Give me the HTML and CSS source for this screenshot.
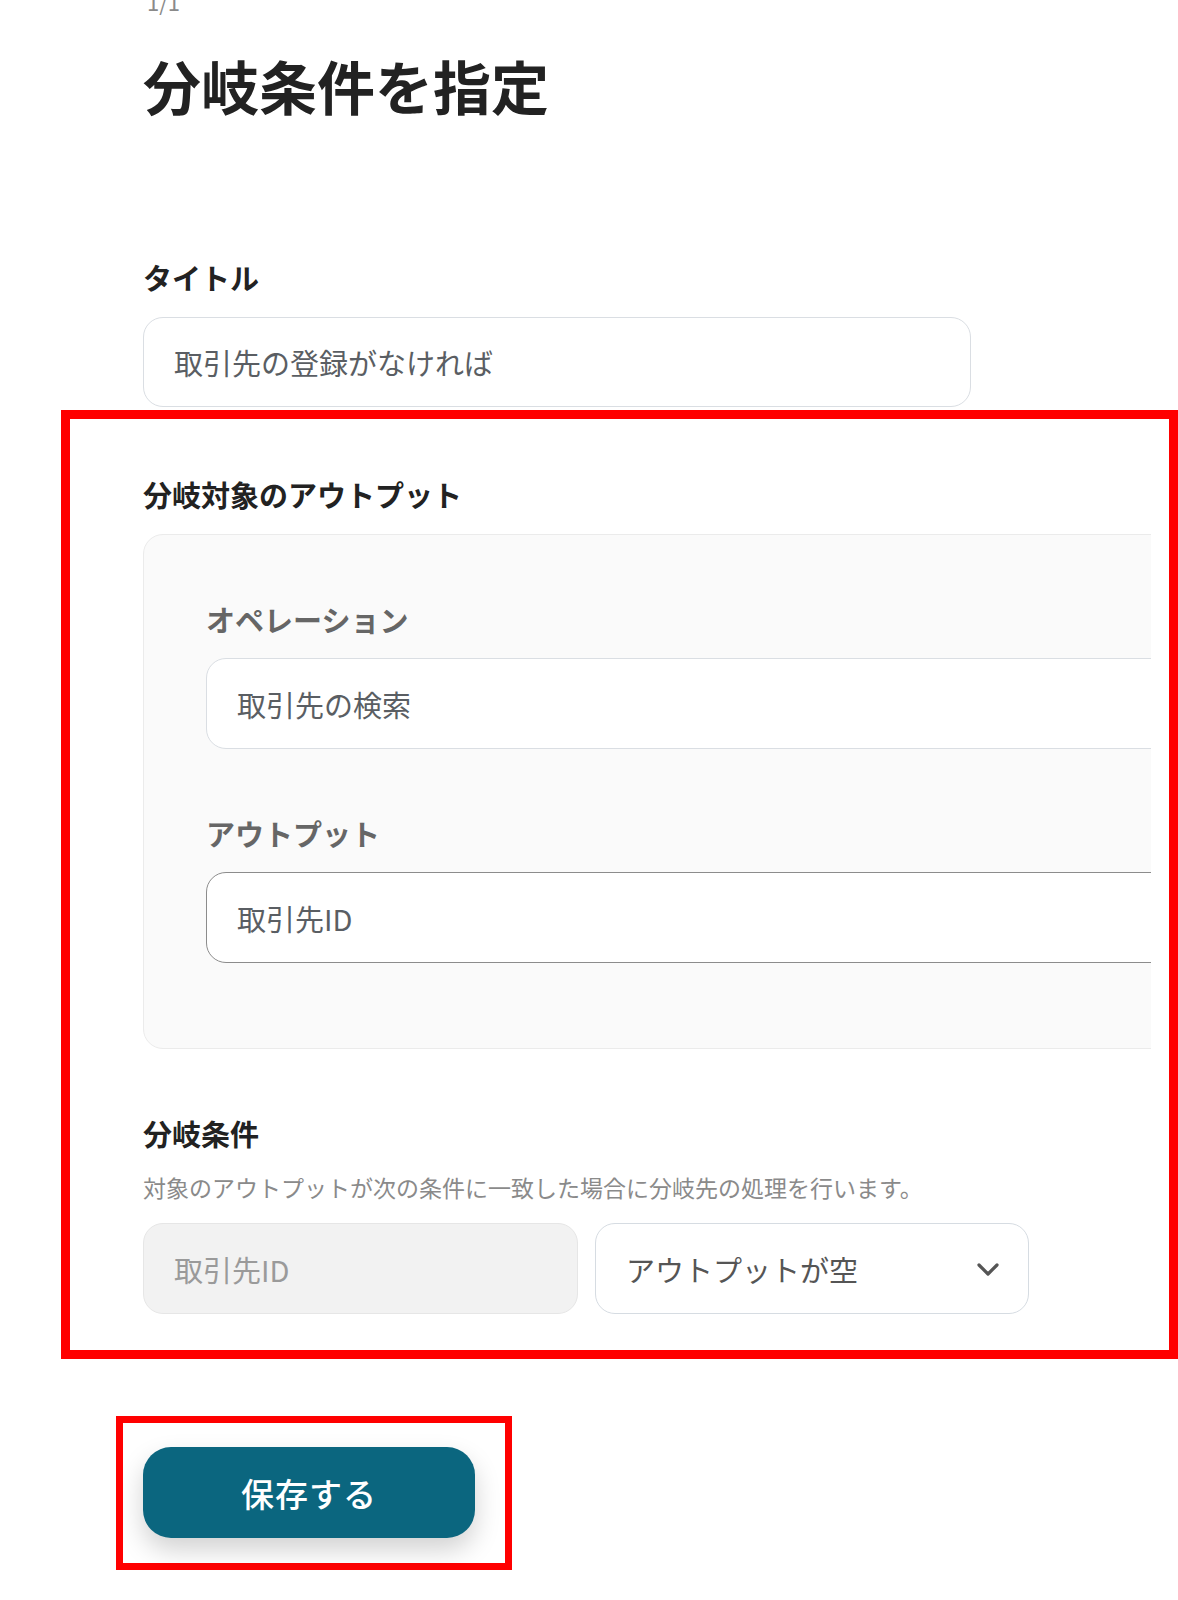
FILE: index.html
```html
<!DOCTYPE html>
<html lang="ja">
<head>
<meta charset="utf-8">
<title>分岐条件を指定</title>
<link rel="stylesheet" href="styles.css">
</head>
<body>
<main class="page">
  <div class="pager">1/1</div>
  <h1 class="page-title">分岐条件を指定</h1>

  <section class="field">
    <div class="field-label">タイトル</div>
    <div class="input input-title">取引先の登録がなければ</div>
  </section>

  <section class="highlight highlight-main">
    <div class="highlight-clip">
      <div class="field-label">分岐対象のアウトプット</div>
      <div class="panel">
        <div class="panel-label">オペレーション</div>
        <div class="input input-wide">取引先の検索</div>
        <div class="panel-label panel-label-gap">アウトプット</div>
        <div class="input input-wide input-active">取引先ID</div>
      </div>

      <div class="field-label cond-label">分岐条件</div>
      <p class="desc">対象のアウトプットが次の条件に一致した場合に分岐先の処理を行います。</p>
      <div class="cond-row">
        <div class="input input-disabled">取引先ID</div>
        <div class="input input-select">
          <span>アウトプットが空</span>
          <svg class="chevron" width="22" height="14" viewBox="0 0 22 14" aria-hidden="true">
            <polyline points="2,2 11,11 20,2" fill="none" stroke="#555" stroke-width="3.2" stroke-linecap="round" stroke-linejoin="round"/>
          </svg>
        </div>
      </div>
    </div>
  </section>

  <div class="highlight highlight-btn">
    <button class="save-btn" type="button">保存する</button>
  </div>
</main>
</body>
</html>
```

FILE: styles.css
```css
* {
  box-sizing: border-box;
}

html, body {
  margin: 0;
  padding: 0;
  background: #ffffff;
}

body {
  font-family: "Noto Sans CJK JP", "Noto Sans", sans-serif;
  color: #222222;
  overflow: hidden;
}

.page {
  padding-left: 143px;
  width: 1178px;
}

.pager {
  margin-top: -14px;
  font-size: 22px;
  line-height: 30px;
  color: #8a8a8a;
  padding-left: 4px;
}

.page-title {
  margin: 34px 0 137px;
  font-size: 58px;
  line-height: 70px;
  font-weight: 700;
  color: #222222;
}

.field-label {
  font-size: 29px;
  line-height: 40px;
  font-weight: 700;
  color: #222222;
  margin-bottom: 20px;
}

.input {
  height: 90px;
  border: 1.5px solid #dadee3;
  border-radius: 20px;
  background: #ffffff;
  display: flex;
  align-items: center;
  padding-left: 30px;
  font-size: 29px;
  color: #5a5e63;
  white-space: nowrap;
}

.input-title {
  width: 828px;
}

.highlight {
  border: 9px solid #ff0000;
}

.highlight-main {
  margin-top: 3px;
  margin-left: -82px;
  width: 1117px;
  padding: 55px 18px 36px 73px;
}

.highlight-clip {
  overflow: hidden;
}

.panel {
  width: 1100px;
  background: #fafafa;
  border: 1px solid #ebebeb;
  border-radius: 20px;
  padding: 64px 0 85px 62px;
}

.panel-label {
  font-size: 29px;
  line-height: 40px;
  font-weight: 700;
  color: #666666;
  margin-bottom: 19px;
}

.panel-label-gap {
  margin-top: 64px;
}

.input-wide {
  width: 100%;
  height: 91px;
}

.input-active {
  border-color: #8c8c8c;
}

.cond-label {
  margin-top: 64px;
  margin-bottom: 18px;
}

.desc {
  margin: 0 0 20px;
  font-size: 23px;
  line-height: 32px;
  color: #8a8a8a;
}

.cond-row {
  display: flex;
  gap: 17px;
}

.input-disabled {
  width: 435px;
  height: 91px;
  background: #f2f2f2;
  border-color: #e6e6e6;
  color: #9a9a9a;
}

.input-select {
  width: 434px;
  height: 91px;
  justify-content: space-between;
  padding-right: 29px;
  border-color: #d6dce2;
  color: #555555;
}

.chevron {
  display: block;
  margin-top: 2px;
}

.highlight-btn {
  margin-top: 57px;
  margin-left: -27px;
  width: 396px;
  height: 154px;
  border-width: 7px;
  padding: 24px 0 0 20px;
}

.save-btn {
  display: flex;
  align-items: center;
  justify-content: center;
  width: 332px;
  height: 91px;
  border: none;
  border-radius: 28px;
  background: #0b667f;
  color: #ffffff;
  font-family: "Noto Sans CJK JP", "Noto Sans", sans-serif;
  font-size: 33px;
  font-weight: 500;
  letter-spacing: 1px;
  box-shadow: 0 12px 26px rgba(0, 0, 0, 0.18);
  cursor: pointer;
}
```
